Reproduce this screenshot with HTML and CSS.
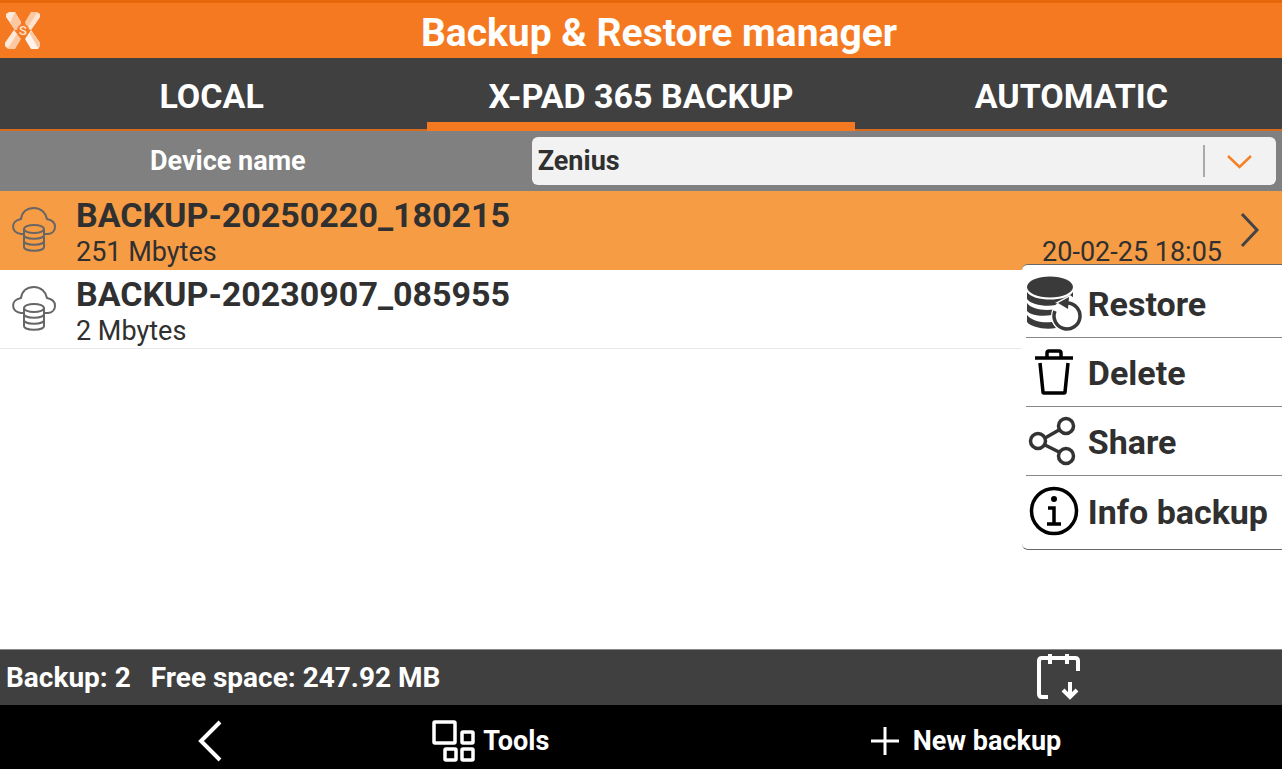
FILE: index.html
```html
<!DOCTYPE html>
<html lang="en">
<head>
    <meta charset="UTF-8">
    <meta name="viewport" content="width=device-width, initial-scale=1.0">
    <title>Backup &amp; Restore manager</title>
    <link rel="stylesheet" href="styles.css">
</head>
<body>
    <header class="header">
        <svg class="logo" viewBox="0 0 36 37" aria-hidden="true">
            <path d="M1 2 L4 0 H10 L16 10 L14 17 L10 18 L1 5Z" fill="#fde8d9"/>
            <path d="M10 0 L16 10 L14 16 L10 18 L5 11Z" fill="#fbc8a2"/>
            <path d="M35 2 L32 0 H26 L20 10 L22 17 L26 18 L35 5Z" fill="#fbc8a2"/>
            <path d="M35 2 V5 L26 18 L23 15 L32 1Z" fill="#fde3d0"/>
            <path d="M9 18 L16 27 L10 37 H3 L0 34 V31Z" fill="#fbc8a2"/>
            <path d="M9 18 L12 22 L3 36 L0 34 V31Z" fill="#fde8d9"/>
            <path d="M26 18 L20 27 L26 37 H33 L35 34 V31Z" fill="#fef4ec"/>
            <path d="M26 18 L35 31 V34 L33 36 L25 22Z" fill="#fbc8a2"/>
            <circle cx="18" cy="18" r="6" fill="#f57c28"/>
            <text class="logo-letter" x="18" y="23" text-anchor="middle">S</text>
        </svg>
        <h1 class="title">Backup &amp; Restore manager</h1>
    </header>

    <nav class="tabs">
        <a class="tab" href="#local">LOCAL</a>
        <a class="tab active" href="#xpad" aria-current="page">X-PAD 365 BACKUP</a>
        <a class="tab" href="#automatic">AUTOMATIC</a>
    </nav>

    <div class="device">
        <label class="device-label" for="device">Device name</label>
        <div class="device-field">
            <select class="device-select" id="device">
                <option>Zenius</option>
            </select>
            <svg class="device-arrow" viewBox="0 0 60 34" aria-hidden="true">
                <path d="M2 1 V33" stroke="#aaa" stroke-width="2"/>
                <path d="M26 12 L37.500 23 L49 12" fill="none" stroke="#f58025" stroke-width="2.500"/>
            </svg>
        </div>
    </div>

    <main class="content">
        <ul class="backup-list">
            <li>
                <button class="backup selected" type="button">
                    <svg class="backup-icon" viewBox="0 0 44 46" aria-hidden="true">
                        <path d="M12 27 H9 C-1 26 -2 14 9 12 C10 5 15 1 22 1 C29 1 34 6 35 12 C46 14 45 26 36 27 H33"/>
                        <ellipse cx="22" cy="22" rx="10" ry="4"/>
                        <path d="M12 22 V40 C12 45 32 45 32 40 V22 M12 28 C12 33 32 33 32 28 M12 34 C12 39 32 39 32 34"/>
                    </svg>
                    <span class="backup-text">
                        <span class="backup-name">BACKUP-20250220_180215</span>
                        <span class="backup-size">251 Mbytes</span>
                    </span>
                    <span class="backup-date">20-02-25 18:05</span>
                    <svg class="backup-next" viewBox="0 0 20 36" aria-hidden="true">
                        <path d="M2 2 L17 18 L2 34"/>
                    </svg>
                </button>
            </li>
            <li>
                <button class="backup" type="button">
                    <svg class="backup-icon" viewBox="0 0 44 46" aria-hidden="true">
                        <path d="M12 27 H9 C-1 26 -2 14 9 12 C10 5 15 1 22 1 C29 1 34 6 35 12 C46 14 45 26 36 27 H33"/>
                        <ellipse cx="22" cy="22" rx="10" ry="4"/>
                        <path d="M12 22 V40 C12 45 32 45 32 40 V22 M12 28 C12 33 32 33 32 28 M12 34 C12 39 32 39 32 34"/>
                    </svg>
                    <span class="backup-text">
                        <span class="backup-name">BACKUP-20230907_085955</span>
                        <span class="backup-size">2 Mbytes</span>
                    </span>
                </button>
            </li>
        </ul>

        <!-- Context menu of the selected backup -->
        <div class="menu">
            <button class="menu-item" type="button">
                <svg class="menu-icon" viewBox="0 0 56 56" aria-hidden="true">
                    <g fill="#3a3a3a">
                        <ellipse cx="24" cy="11" rx="23" ry="10.500"/>
                        <path d="M1 16 C7 26 41 26 47 16 V22 L30 29 C20 31 5 29 1 23Z"/>
                        <path d="M1 27 C6 34 20 35 30 33 L26 39 C15 41 4 39 1 35Z"/>
                        <path d="M1 39 C7 46 18 47 26 46 L30 52 C18 54 5 51 1 46Z"/>
                    </g>
                    <circle cx="41" cy="40" r="16" fill="#fff"/>
                    <path d="M29 27 L44 19 L48 22 V30Z" fill="#fff"/>
                    <path d="M41 27 A13 13 0 1 1 29 35" fill="none" stroke="#3a3a3a" stroke-width="3.500"/>
                    <path d="M32 27 L43 21 L42 33Z" fill="#3a3a3a"/>
                </svg>
                Restore
            </button>
            <button class="menu-item" type="button">
                <svg class="menu-icon" viewBox="0 0 56 56" aria-hidden="true">
                    <g fill="none" stroke="#000" stroke-width="3.500">
                        <path d="M9 13 H47 M21 12 V8 Q21 6 23 6 H33 Q35 6 35 8 V12"/>
                        <path d="M14 18 L17 47 Q17 48 18 48 H38 Q39 48 39 47 L42 18"/>
                    </g>
                </svg>
                Delete
            </button>
            <button class="menu-item" type="button">
                <svg class="menu-icon" viewBox="0 0 56 56" aria-hidden="true">
                    <g fill="none" stroke="#333" stroke-width="3.500">
                        <circle cx="12" cy="27" r="7.500"/>
                        <circle cx="40" cy="12" r="7.500"/>
                        <circle cx="40" cy="42" r="7.500"/>
                        <path d="M19 24 L33 16 M19 31 L33 38"/>
                    </g>
                </svg>
                Share
            </button>
            <button class="menu-item" type="button">
                <svg class="menu-icon" viewBox="0 0 56 56" aria-hidden="true">
                    <circle cx="28" cy="27" r="22.500" fill="none" stroke="#000" stroke-width="3.500"/>
                    <circle cx="28" cy="15" r="3" fill="#000"/>
                    <path d="M22 24 H28 V40 M21 40 H35" fill="none" stroke="#000" stroke-width="3.500"/>
                </svg>
                Info backup
            </button>
        </div>
    </main>

    <div class="status">
        <span>Backup: 2</span>
        <span>Free space: 247.92 MB</span>
        <button class="status-button" type="button" aria-label="Schedule">
            <svg class="status-icon" viewBox="0 0 44 48" aria-hidden="true">
                <path d="M12 45 H6 Q3 45 3 42 V9 Q3 6 6 6 H39 Q42 6 42 9 V19"/>
                <path d="M14 2 V12 M31 2 V12 M34 30 V45 M27 38 L34 45 L41 38"/>
            </svg>
        </button>
    </div>

    <footer class="toolbar">
        <button class="tool back" type="button" aria-label="Back">
            <svg class="back-icon" viewBox="0 0 24 42" aria-hidden="true">
                <path d="M22 2 L3 21 L22 40" fill="none" stroke="#fff" stroke-width="4"/>
            </svg>
        </button>
        <button class="tool" type="button">
            <svg class="tools-icon" viewBox="0 0 44 42" aria-hidden="true">
                <g fill="none" stroke="#fff" stroke-width="3.500">
                    <rect x="3" y="2" width="21" height="21" rx="1"/>
                    <rect x="31" y="12" width="11" height="11" rx="1"/>
                    <rect x="14" y="29" width="11" height="11" rx="1"/>
                    <rect x="31" y="29" width="11" height="11" rx="1"/>
                </g>
            </svg>
            Tools
        </button>
        <button class="tool new" type="button">
            <svg class="plus-icon" viewBox="0 0 28 28" aria-hidden="true">
                <path d="M14 0 V28 M0 14 H28" stroke="#fff" stroke-width="3"/>
            </svg>
            New backup
        </button>
    </footer>
</body>
</html>
```
FILE: styles.css
```css
:root {
    --orange: #f57920;
    --orange-light: #f69c45;
    --dark: #404040;
    --grey: #808080;
    --text: #303030;
}

* {
    margin: 0;
    padding: 0;
    box-sizing: border-box;
}

body {
    display: flex;
    flex-direction: column;
    min-height: 100vh;
    font-family: Roboto, sans-serif;
    font-size: 27px;
    font-weight: 700;
    color: var(--text);
    background: #fff;
}

button,
select {
    font: inherit;
    color: inherit;
    background: none;
    border: 0;
}

/* Header */
.header {
    display: flex;
    align-items: center;
    height: 58px;
    padding: 0 5px;
    border-top: 3px solid #e8660a;
    background: var(--orange);
}

.logo {
    width: 36px;
    height: 37px;
}

.logo-letter {
    font-size: 13px;
    font-weight: 500;
    fill: #fde3d0;
}

.title {
    flex: 1;
    padding-top: 4px;
    font-size: 39px;
    line-height: 44px;
    text-align: center;
    color: #fff;
}

/* Tabs */
.tabs {
    display: grid;
    grid-template-columns: repeat(3, 1fr);
    height: 73px;
    background: var(--dark);
    border-bottom: 2px solid #d66b1e;
}

.tab {
    display: flex;
    align-items: center;
    justify-content: center;
    padding-top: 4px;
    font-size: 34px;
    color: #fff;
    text-decoration: none;
}

.tab:first-child {
    padding-right: 4px;
}

.tab:last-child {
    padding-left: 6px;
}

.tab.active {
    padding-top: 12px;
    margin-bottom: -2px;
    border-bottom: 9px solid var(--orange);
}

/* Device selector */
.device {
    display: grid;
    grid-template-columns: 5fr 7fr;
    align-items: center;
    height: 60px;
    padding-right: 6px;
    background: var(--grey);
}

.device-label {
    padding-right: 76px;
    text-align: center;
    color: #fff;
}

.device-field {
    display: grid;
    align-items: center;
}

.device-select,
.device-arrow {
    grid-area: 1 / 1;
}

.device-select {
    appearance: none;
    width: 100%;
    height: 48px;
    padding: 0 6px;
    border-radius: 6px;
    background: #f2f2f2;
}

.device-arrow {
    justify-self: end;
    width: 60px;
    height: 34px;
    margin-right: 14px;
    pointer-events: none;
}

/* Backup list */
.content {
    position: relative;
    flex: 1;
}

.backup-list {
    list-style: none;
}

.backup {
    display: flex;
    align-items: center;
    width: 100%;
    height: 79px;
    padding: 0 22px 0 12px;
    text-align: left;
    border-bottom: 1px solid #e8e8e8;
}

.backup.selected {
    background: var(--orange-light);
    border-bottom-color: var(--orange-light);
}

.backup-icon {
    width: 44px;
    height: 46px;
    fill: none;
    stroke: #666;
    stroke-width: 2;
}

.backup-text {
    display: flex;
    flex: 1;
    flex-direction: column;
    padding: 4px 0 0 20px;
}

.backup-name {
    font-size: 34px;
    line-height: 40px;
}

.backup-size,
.backup-date {
    font-weight: 400;
    line-height: 34px;
}

.backup-date {
    align-self: flex-end;
    margin-right: 18px;
}

.backup-next {
    width: 20px;
    height: 36px;
    fill: none;
    stroke: #444;
    stroke-width: 3;
}

/* Context menu */
.menu {
    position: absolute;
    top: 73px;
    right: 0;
    padding: 4px 0 4px 4px;
    border: 1px solid #666;
    border-width: 1px 0 1px 0;
    border-radius: 6px 0 0 6px;
    background: #fff;
}

.menu-item {
    display: flex;
    align-items: center;
    gap: 6px;
    width: 100%;
    height: 69px;
    padding: 2px 14px 0 0;
    font-size: 34px;
    border-bottom: 1px solid #888;
}

.menu-item:last-child {
    border-bottom: 0;
}

.menu-icon {
    width: 56px;
    height: 56px;
}

/* Status bar */
.status {
    display: grid;
    grid-template-columns: auto 1fr auto;
    align-items: center;
    gap: 20px;
    height: 56px;
    padding: 0 202px 0 6px;
    font-size: 28px;
    color: #fff;
    background: var(--dark);
    border-top: 1px solid #888;
}

.status-button {
    height: 55px;
}

.status-icon {
    display: block;
    width: 44px;
    height: 48px;
    margin-bottom: 4px;
    fill: none;
    stroke: #fff;
    stroke-width: 4;
}

/* Bottom toolbar */
.toolbar {
    display: grid;
    grid-template-columns: repeat(3, 1fr);
    height: 64px;
    color: #fff;
    background: #000;
}

.tool {
    display: flex;
    align-items: center;
    gap: 8px;
    padding: 8px 0 0 4px;
}

.tool.back {
    justify-content: center;
    padding-right: 12px;
}

.tool.new {
    gap: 14px;
    padding-left: 16px;
}

.back-icon {
    width: 24px;
    height: 42px;
}

.tools-icon {
    width: 44px;
    height: 42px;
}

.plus-icon {
    width: 28px;
    height: 28px;
}
```
